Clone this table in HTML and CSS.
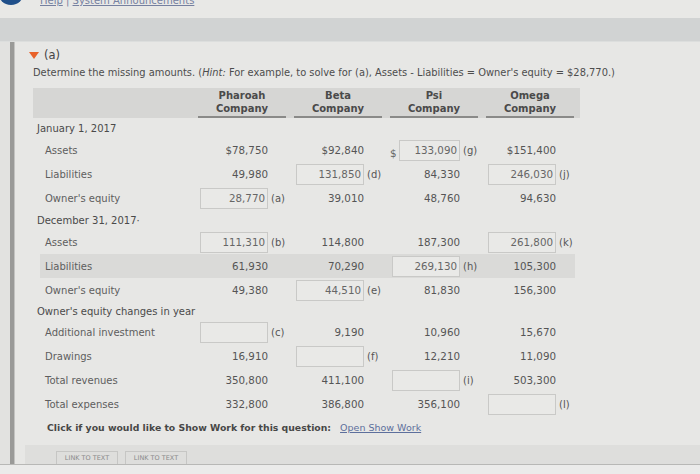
FILE: index.html
```html
<!DOCTYPE html>
<html>
<head>
<meta charset="utf-8">
<link rel="stylesheet" href="styles.css">
</head>
<body>
<div class="page">
  <div class="topstrip">
    <span class="logo"></span>
    <span class="toplinks"><a>Help</a> | <a>System Announcements</a></span>
  </div>
  <div class="band"></div>
  <div class="main">
    <div class="gutter"></div>
    <div class="bar"></div>
    <div class="panel">
      <div class="title"><span class="tri"></span>(a)</div>
      <div class="hint">Determine the missing amounts. (<i>Hint:</i> For example, to solve for (a), Assets - Liabilities = Owner's equity = $28,770.)</div>
      <div class="table">
        <div class="row head">
          <div></div>
          <div class="co">Pharoah<br>Company</div>
          <div class="co">Beta<br>Company</div>
          <div class="co">Psi<br>Company</div>
          <div class="co">Omega<br>Company</div>
        </div>

        <div class="row sec"><div class="lbl">January 1, 2017</div></div>
        <div class="row">
          <div class="lbl item">Assets</div>
          <div class="v">$78,750</div><div class="s"></div>
          <div class="v">$92,840</div><div class="s"></div>
          <div class="v"><span class="dollar">$</span><span class="box sm">133,090</span></div><div class="s">(g)</div>
          <div class="v">$151,400</div><div class="s"></div>
        </div>
        <div class="row">
          <div class="lbl item">Liabilities</div>
          <div class="v">49,980</div><div class="s"></div>
          <div class="v"><span class="box">131,850</span></div><div class="s">(d)</div>
          <div class="v">84,330</div><div class="s"></div>
          <div class="v"><span class="box">246,030</span></div><div class="s">(j)</div>
        </div>
        <div class="row">
          <div class="lbl item">Owner's equity</div>
          <div class="v"><span class="box">28,770</span></div><div class="s">(a)</div>
          <div class="v">39,010</div><div class="s"></div>
          <div class="v">48,760</div><div class="s"></div>
          <div class="v">94,630</div><div class="s"></div>
        </div>

        <div class="row sec"><div class="lbl">December 31, 2017·</div></div>
        <div class="row">
          <div class="lbl item">Assets</div>
          <div class="v"><span class="box">111,310</span></div><div class="s">(b)</div>
          <div class="v">114,800</div><div class="s"></div>
          <div class="v">187,300</div><div class="s"></div>
          <div class="v"><span class="box">261,800</span></div><div class="s">(k)</div>
        </div>
        <div class="row shade">
          <div class="lbl item">Liabilities</div>
          <div class="v">61,930</div><div class="s"></div>
          <div class="v">70,290</div><div class="s"></div>
          <div class="v"><span class="box">269,130</span></div><div class="s">(h)</div>
          <div class="v">105,300</div><div class="s"></div>
        </div>
        <div class="row">
          <div class="lbl item">Owner's equity</div>
          <div class="v">49,380</div><div class="s"></div>
          <div class="v"><span class="box">44,510</span></div><div class="s">(e)</div>
          <div class="v">81,830</div><div class="s"></div>
          <div class="v">156,300</div><div class="s"></div>
        </div>

        <div class="row sec short"><div class="lbl">Owner's equity changes in year</div></div>
        <div class="row">
          <div class="lbl item">Additional investment</div>
          <div class="v"><span class="box"></span></div><div class="s">(c)</div>
          <div class="v">9,190</div><div class="s"></div>
          <div class="v">10,960</div><div class="s"></div>
          <div class="v">15,670</div><div class="s"></div>
        </div>
        <div class="row">
          <div class="lbl item">Drawings</div>
          <div class="v">16,910</div><div class="s"></div>
          <div class="v"><span class="box"></span></div><div class="s">(f)</div>
          <div class="v">12,210</div><div class="s"></div>
          <div class="v">11,090</div><div class="s"></div>
        </div>
        <div class="row">
          <div class="lbl item">Total revenues</div>
          <div class="v">350,800</div><div class="s"></div>
          <div class="v">411,100</div><div class="s"></div>
          <div class="v"><span class="box"></span></div><div class="s">(i)</div>
          <div class="v">503,300</div><div class="s"></div>
        </div>
        <div class="row">
          <div class="lbl item">Total expenses</div>
          <div class="v">332,800</div><div class="s"></div>
          <div class="v">386,800</div><div class="s"></div>
          <div class="v">356,100</div><div class="s"></div>
          <div class="v"><span class="box"></span></div><div class="s">(l)</div>
        </div>
      </div>
      <div class="showwork"><b>Click if you would like to Show Work for this question:</b> <a>Open Show Work</a></div>
      <div class="footer">
        <span class="btn">LINK TO TEXT</span>
        <span class="btn">LINK TO TEXT</span>
      </div>
    </div>
  </div>
  <div class="bottom"></div>
</div>
</body>
</html>
```

FILE: styles.css
```css
* { box-sizing: border-box; }
html, body {
  margin: 0;
  padding: 0;
  background: #e6e6e3;
  font-family: "DejaVu Sans", Verdana, sans-serif;
  color: #595959;
}
.page {
  width: 700px;
  height: 474px;
  overflow: hidden;
  display: flex;
  flex-direction: column;
}
.topstrip {
  height: 18px;
  overflow: hidden;
  display: flex;
  align-items: flex-start;
  gap: 16px;
  background: #e8e8e6;
}
.logo {
  width: 26px;
  height: 26px;
  border-radius: 50%;
  background: #1f4f8a;
  margin-top: -21px;
  margin-left: -2px;
  flex: none;
}
.toplinks {
  margin-top: -5px;
  font-size: 10px;
  line-height: 12px;
  color: #7580a0;
}
.toplinks a { text-decoration: underline; }
.band {
  height: 24px;
  background: #d1d3d3;
  border-bottom: 1px solid #dcdedd;
}
.main {
  flex: 1;
  display: flex;
  min-height: 0;
}
.gutter {
  width: 10px;
  background: #e2e2e0;
}
.bar {
  width: 5px;
  background: #9a9a98;
  border-right: 1px solid #c3c3c1;
}
.panel {
  flex: 1;
  background: #e7e7e5;
  padding-left: 10px;
  display: flex;
  flex-direction: column;
}
.title {
  margin-top: 6px;
  font-size: 11.5px;
  color: #444;
  display: flex;
  align-items: center;
  gap: 5px;
  height: 14px;
}
.tri {
  width: 0;
  height: 0;
  border-left: 5px solid transparent;
  border-right: 5px solid transparent;
  border-top: 7px solid #e8622a;
  margin-left: 4px;
}
.hint {
  margin-top: 3px;
  font-size: 9.9px;
  color: #4d4d4d;
  padding-left: 8px;
  height: 15px;
  line-height: 15px;
  white-space: nowrap;
}
.table {
  margin-top: 8px;
  margin-left: 15px;
  width: 545px;
}
.row {
  display: grid;
  grid-template-columns: 158px repeat(4, 70px 26px);
  height: 24px;
  align-items: center;
  font-size: 10px;
}
.row.head {
  grid-template-columns: 158px repeat(4, 96px);
  height: 30px;
  margin-left: -7px;
  padding-left: 7px;
  width: 547px;
  background: #d6d6d4;
  align-items: end;
}
.co {
  width: 88px;
  text-align: center;
  font-weight: bold;
  font-size: 10px;
  line-height: 13px;
  color: #4a4a4a;
  border-bottom: 2px solid #8a8a88;
  padding-bottom: 1px;
}
.row.sec { height: 20px; }
.row.sec.short { height: 18px; }
.row.sec .lbl { grid-column: 1 / -1; color: #4a4a4a; margin-left: -3px; }
.lbl { white-space: nowrap; }
.lbl.item { padding-left: 5px; color: #5e5e5e; }
.row.shade { background: #dadad8; margin-right: 10px; }
.v {
  display: flex;
  justify-content: flex-end;
  align-items: center;
  gap: 2px;
  text-align: right;
  color: #555;
  white-space: nowrap;
  font-size: 10.3px;
}
.s {
  padding-left: 3px;
  color: #555;
}
.box {
  width: 68px;
  height: 21px;
  border: 1px solid #c9c9c7;
  background: #e9e9e7;
  display: flex;
  align-items: center;
  justify-content: flex-end;
  padding-right: 2px;
  color: #666;
}
.box.sm { width: 62px; }
.dollar { color: #666; margin-top: 6px; }
.showwork {
  margin-top: 6px;
  padding-left: 22px;
  font-size: 9.3px;
  color: #474747;
  height: 16px;
}
.showwork a {
  text-decoration: underline;
  color: #5d6f9c;
  font-size: 9.5px;
  margin-left: 6px;
}
.footer {
  margin-top: 12px;
  flex: 1;
  background: #dededc;
  display: flex;
  gap: 7px;
  padding-left: 31px;
  padding-top: 6px;
}
.btn {
  height: 16px;
  padding: 0 4px;
  border: 1px solid #c6c6c4;
  border-bottom: none;
  font-size: 6.5px;
  color: #8a8a8a;
  line-height: 12px;
  width: 62px;
  text-align: center;
}
.bottom {
  height: 10px;
  background: #ebebea;
  border-top: 1px solid #b8b8b6;
}
```
